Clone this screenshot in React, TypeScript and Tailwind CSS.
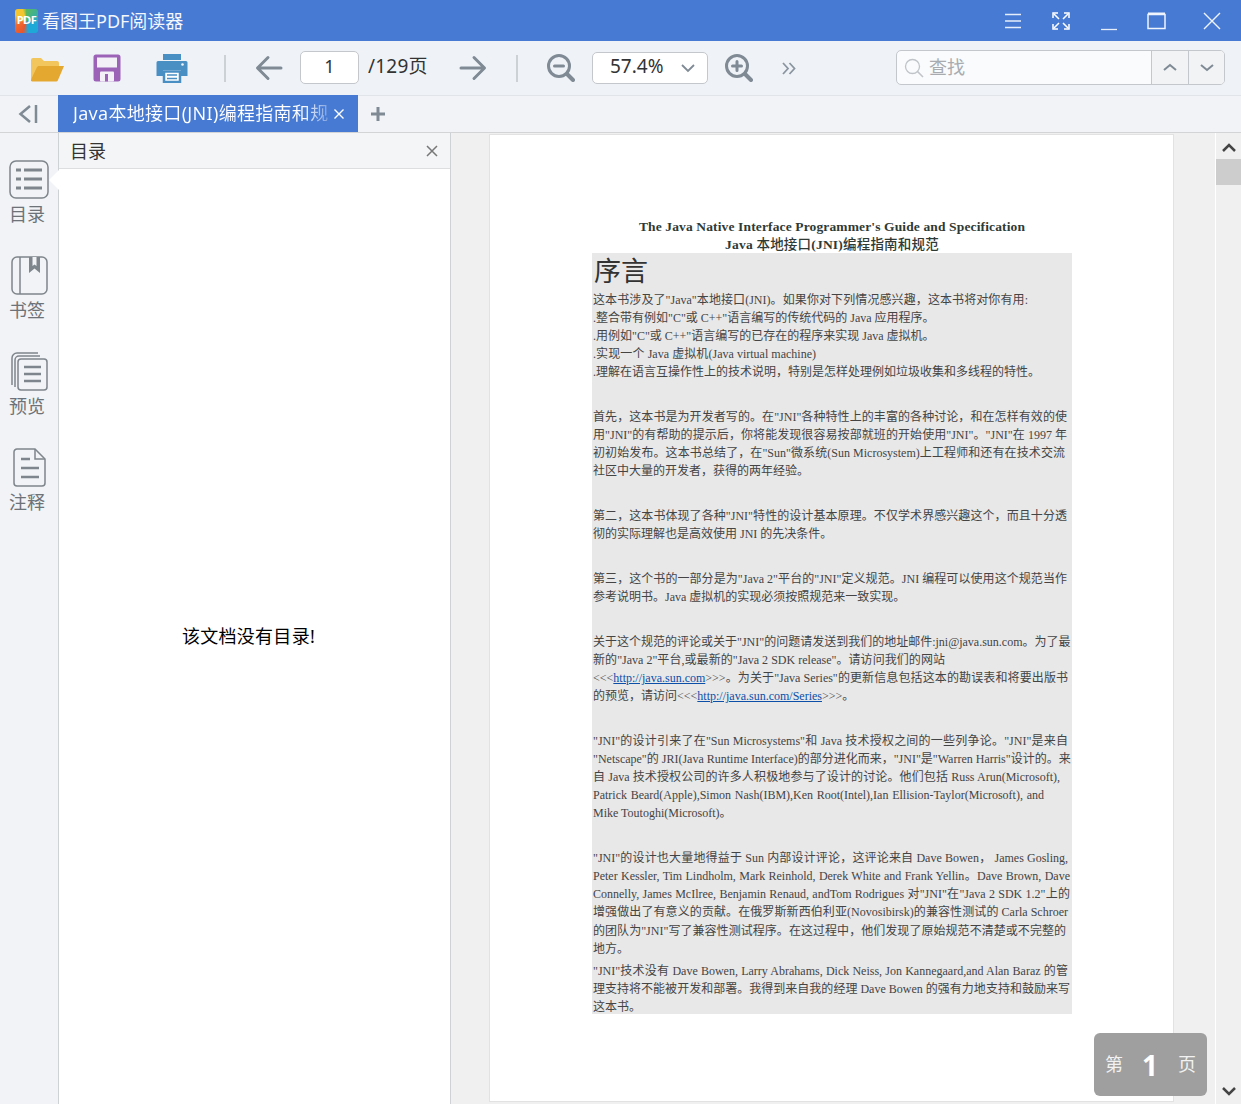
import React from "react";

const UI_FONT = "font-['Noto_Sans','Noto_Sans_CJK_SC',sans-serif]";

const FolderIcon = () => (
    <svg width="34" height="28" viewBox="0 0 34 28">
        <path d="M1 5a2 2 0 0 1 2-2h8l3 3h13a2 2 0 0 1 2 2v3H8L3 24H1z" fill="#f2c65c" />
        <path d="M8 11h26l-6 14a2 2 0 0 1-2 1.500H2.500a1.500 1.500 0 0 1-1.400-2L7 12z" fill="#e4a730" />
    </svg>
);

const SaveIcon = () => (
    <svg width="28" height="28" viewBox="0 0 28 28">
        <path d="M3 0.500h22a2.500 2.500 0 0 1 2.500 2.500v22a2.500 2.500 0 0 1-2.500 2.500H3A2.500 2.500 0 0 1 0.500 25V3A2.500 2.500 0 0 1 3 0.500z" fill="#9b62b8" />
        <rect x="4" y="3.500" width="20" height="10" fill="#f4f0f7" />
        <rect x="7" y="17.500" width="14" height="10" rx="1" fill="#f4f0f7" />
        <rect x="12" y="20" width="3" height="7.500" fill="#9b62b8" />
    </svg>
);

const PrintIcon = () => (
    <svg width="32" height="30" viewBox="0 0 32 30">
        <path d="M7 1h18v6H7z" fill="#4a8fc4" />
        <path d="M2 8h28a1.500 1.500 0 0 1 1.500 1.500V23H25v-6H7v6H0.500V9.500A1.500 1.500 0 0 1 2 8z" fill="#4a8fc4" />
        <circle cx="26.500" cy="11.500" r="1.300" fill="#f0f4f8" />
        <path d="M8 18.500h16V29H8z" fill="#fff" stroke="#4a8fc4" strokeWidth="2.500" />
        <path d="M11 22h10M11 25.500h10" stroke="#4a8fc4" strokeWidth="1.600" />
    </svg>
);

const ArrowIcon = ({ flip }: { flip?: boolean }) => (
    <svg width="28" height="26" viewBox="0 0 28 26" className={flip ? "-scale-x-100" : ""}>
        <path d="M26 13H3M13 2.500 2.500 13 13 23.500" fill="none" stroke="#7f8a95" strokeWidth="3" strokeLinecap="round" strokeLinejoin="round" />
    </svg>
);

const ZoomIcon = ({ plus }: { plus?: boolean }) => (
    <svg width="28" height="28" viewBox="0 0 28 28">
        <circle cx="12" cy="12" r="10.500" fill="none" stroke="#7f8a95" strokeWidth="3" />
        <path d="M20 20l6 6" stroke="#7f8a95" strokeWidth="4" strokeLinecap="round" />
        <path d={plus ? "M7.500 12h9M12 7.500v9" : "M7.500 12h9"} stroke="#7f8a95" strokeWidth="3" strokeLinecap="round" />
    </svg>
);

const Divider = () => <div className="w-[2px] h-[27px] bg-[#ccd1d6]" />;

const TocIcon = () => (
    <svg width="40" height="39" viewBox="0 0 40 39">
        <rect x="1" y="1" width="38" height="37" rx="6" fill="none" stroke="#7f858c" strokeWidth="1.500" />
        <path d="M7 10h5M15 10h18M7 19h5M15 19h18M7 28h5M15 28h18" stroke="#7f858c" strokeWidth="3" />
    </svg>
);

const BookmarkIcon = () => (
    <svg width="37" height="39" viewBox="0 0 37 39">
        <rect x="1" y="1" width="35" height="37" rx="5" fill="none" stroke="#7f858c" strokeWidth="1.500" />
        <path d="M9 1v37" stroke="#7f858c" strokeWidth="1.500" />
        <path d="M18 1h11v16l-5.500-4.500L18 17z" fill="#7f858c" />
        <path d="M21.500 1h4v9l-2-1.500-2 1.500z" fill="#f1f3f6" />
    </svg>
);

const PreviewIcon = () => (
    <svg width="37" height="39" viewBox="0 0 37 39">
        <path d="M1 33V6a5 5 0 0 1 5-5h21" fill="none" stroke="#7f858c" strokeWidth="1.500" />
        <path d="M4 35V8a4 4 0 0 1 4-4h21" fill="none" stroke="#7f858c" strokeWidth="1.500" />
        <rect x="7" y="7" width="29" height="31" rx="3" fill="#f1f3f6" stroke="#7f858c" strokeWidth="1.500" />
        <path d="M13 15h17M13 22h17M13 29h17" stroke="#7f858c" strokeWidth="2.500" />
    </svg>
);

const NoteIcon = () => (
    <svg width="33" height="39" viewBox="0 0 33 39">
        <path d="M4 1h18l10 10v24a3 3 0 0 1-3 3H4a3 3 0 0 1-3-3V4a3 3 0 0 1 3-3z" fill="none" stroke="#7f858c" strokeWidth="1.500" />
        <path d="M22 1v10h10" fill="none" stroke="#7f858c" strokeWidth="1.500" />
        <path d="M8 11h9M8 20h18M8 29h18" stroke="#7f858c" strokeWidth="2.500" />
    </svg>
);

const railItems = [
    { label: "目录", icon: <TocIcon />, active: true },
    { label: "书签", icon: <BookmarkIcon /> },
    { label: "预览", icon: <PreviewIcon /> },
    { label: "注释", icon: <NoteIcon /> },
];

const Line = ({ className, children }: { className: string; children: React.ReactNode }) => (
    <div className={`h-[18px] leading-[18px] whitespace-nowrap [text-align-last:justify] ${className}`}>{children}</div>
);

const Link = ({ children }: { children: React.ReactNode }) => (
    <span className="text-[#0b4fa8] underline">{children}</span>
);

const PdfPage = () => (
    <div className="w-[685px] h-[968px] ml-[38px] mt-[1px] bg-white border border-[#e2e2e2] pt-[83px] pl-[102px] shrink-0 text-[#444] text-[12px] font-['Liberation_Serif','Noto_Sans_CJK_SC',serif]">
        <div className="w-[480px] text-center font-bold text-[#2f3a36] text-[13.500px]">
            <div className="h-[17px] leading-[18px] tracking-[0.13px]">The Java Native Interface Programmer's Guide and Specification</div>
            <div className="h-[18px] leading-[20px] tracking-[0.2px]">Java <span className="font-medium">本地接口</span>(JNI)<span className="font-medium">编程指南和规范</span></div>
        </div>
        <div className="w-[480px] h-[761px] bg-[#e8e8e8] pl-[1px]">
            <div className="h-[38px] leading-[38px] pl-[1px] text-[27px] text-[#333]">序言</div>
            <Line className="w-[435px]">这本书涉及了"Java"本地接口(JNI)。如果你对下列情况感兴趣&#xFF0C;这本书将对你有用:</Line>
            <Line className="w-[339px]">.整合带有例如"C"或 C++"语言编写的传统代码的 Java 应用程序。</Line>
            <Line className="w-[339px]">.用例如"C"或 C++"语言编写的已存在的程序来实现 Java 虚拟机。</Line>
            <Line className="w-[223px]">.实现一个 Java 虚拟机(Java virtual machine)</Line>
            <Line className="w-[445px]">.理解在语言互操作性上的技术说明&#xFF0C;特别是怎样处理例如垃圾收集和多线程的特性。</Line>

            <div className="mt-[27px]">
                <Line className="w-[474px]">首先&#xFF0C;这本书是为开发者写的。在"JNI"各种特性上的丰富的各种讨论&#xFF0C;和在怎样有效的使</Line>
                <Line className="w-[474px]">用"JNI"的有帮助的提示后&#xFF0C;你将能发现很容易按部就班的开始使用"JNI"。"JNI"在 1997 年</Line>
                <Line className="w-[472px]">初初始发布。这本书总结了&#xFF0C;在"Sun"微系统(Sun Microsystem)上工程师和还有在技术交流</Line>
                <Line className="w-[213px]">社区中大量的开发者&#xFF0C;获得的两年经验。</Line>
            </div>

            <div className="mt-[27px]">
                <Line className="w-[474px]">第二&#xFF0C;这本书体现了各种"JNI"特性的设计基本原理。不仅学术界感兴趣这个&#xFF0C;而且十分透</Line>
                <Line className="w-[234px]">彻的实际理解也是高效使用 JNI 的先决条件。</Line>
            </div>

            <div className="mt-[27px]">
                <Line className="w-[474px]">第三&#xFF0C;这个书的一部分是为"Java 2"平台的"JNI"定义规范。JNI 编程可以使用这个规范当作</Line>
                <Line className="w-[310px]">参考说明书。Java 虚拟机的实现必须按照规范来一致实现。</Line>
            </div>

            <div className="mt-[27px]">
                <Line className="w-[477px]">关于这个规范的评论或关于"JNI"的问题请发送到我们的地址邮件:jni@java.sun.com。为了最</Line>
                <Line className="w-[352px]">新的"Java 2"平台,或最新的"Java 2 SDK release"。请访问我们的网站</Line>
                <Line className="w-[475px]">{"<<<"}<Link>http://java.sun.com</Link>{">>>"}。为关于"Java Series"的更新信息包括这本的勘误表和将要出版书</Line>
                <Line className="w-[258px]">的预览&#xFF0C;请访问{"<<<"}<Link>http://java.sun.com/Series</Link>{">>>"}。</Line>
            </div>

            <div className="mt-[27px]">
                <Line className="w-[475px]">"JNI"的设计引来了在"Sun Microsystems"和 Java 技术授权之间的一些列争论。"JNI"是来自</Line>
                <Line className="w-[477px]">"Netscape"的 JRI(Java Runtime Interface)的部分进化而来&#xFF0C;"JNI"是"Warren Harris"设计的。来</Line>
                <Line className="w-[467px]">自 Java 技术授权公司的许多人积极地参与了设计的讨论。他们包括 Russ Arun(Microsoft),</Line>
                <Line className="w-[451px]">Patrick Beard(Apple),Simon Nash(IBM),Ken Root(Intel),Ian Ellision-Taylor(Microsoft), and</Line>
                <Line className="w-[134px]">Mike Toutoghi(Microsoft)。</Line>
            </div>

            <div className="mt-[27px]">
                <Line className="w-[475px]">"JNI"的设计也大量地得益于 Sun 内部设计评论&#xFF0C;这评论来自 Dave Bowen&#xFF0C; James Gosling,</Line>
                <Line className="w-[477px]">Peter Kessler, Tim Lindholm, Mark Reinhold, Derek White and Frank Yellin。Dave Brown, Dave</Line>
                <Line className="w-[477px]">Connelly, James McIlree, Benjamin Renaud, andTom Rodrigues 对"JNI"在"Java 2 SDK 1.2"上的</Line>
                <Line className="w-[475px]">增强做出了有意义的贡献。在俄罗斯新西伯利亚(Novosibirsk)的兼容性测试的 Carla Schroer</Line>
                <Line className="w-[473px] mt-[1px]">的团队为"JNI"写了兼容性测试程序。在这过程中&#xFF0C;他们发现了原始规范不清楚或不完整的</Line>
                <Line className="w-[31px]">地方。</Line>
            </div>

            <div className="mt-[4px]">
                <Line className="w-[475px]">"JNI"技术没有 Dave Bowen, Larry Abrahams, Dick Neiss, Jon Kannegaard,and Alan Baraz 的管</Line>
                <Line className="w-[477px]">理支持将不能被开发和部署。我得到来自我的经理 Dave Bowen 的强有力地支持和鼓励来写</Line>
                <Line className="w-[44px]">这本书。</Line>
            </div>
        </div>
    </div>
);

const App: React.FC = () => {
    return (
        <div className={`relative w-[1241px] h-[1104px] overflow-hidden flex flex-col bg-white ${UI_FONT}`}>
            {/* title bar */}
            <div className="h-[41px] shrink-0 bg-[#477ad3] flex items-center text-white">
                <div className="ml-[15px] w-[23px] h-[24px] rounded-[3px] flex items-center justify-center text-[11px] font-bold tracking-[-0.5px] bg-[conic-gradient(#5ab95c_0deg,#1ea8d8_110deg,#1ea8d8_170deg,#e8562e_200deg,#f26a2c_250deg,#f5c52f_300deg,#f5c52f_340deg,#5ab95c_360deg)]">PDF</div>
                <span className="ml-[4px] text-[18px] leading-none text-[#f4f7fc]">看图王PDF阅读器</span>
                <div className="flex-1" />
                <svg width="18" height="16" viewBox="0 0 18 16" className="mr-[30px]">
                    <path d="M1 1.500h16M1 8h16M1 14.500h16" stroke="#e6eefb" strokeWidth="1.500" />
                </svg>
                <svg width="18" height="18" viewBox="0 0 18 18" className="mr-[30px]">
                    <path d="M2 2l5 5M16 2l-5 5M2 16l5-5M16 16l-5-5" stroke="#fff" strokeWidth="1.500" />
                    <path d="M1 6V1h5M12 1h5v5M1 12v5h5M17 12v5h-5" fill="none" stroke="#fff" strokeWidth="1.500" />
                </svg>
                <svg width="18" height="18" viewBox="0 0 18 18" className="mr-[29px] mt-[6px]">
                    <path d="M1 14.500h16" stroke="#e6eefb" strokeWidth="1.300" />
                </svg>
                <svg width="19" height="18" viewBox="0 0 19 18" className="mr-[37px]">
                    <path d="M1 2.500h17V16.500H1z" fill="none" stroke="#f0f5fd" strokeWidth="1.500" />
                    <path d="M1 1.500h17" stroke="#f0f5fd" strokeWidth="2" />
                </svg>
                <svg width="18" height="18" viewBox="0 0 18 18" className="mr-[20px]">
                    <path d="M1 1l16 16M17 1L1 17" stroke="#f0f5fd" strokeWidth="1.400" />
                </svg>
            </div>

            {/* toolbar */}
            <div className="h-[55px] shrink-0 bg-[#eff3f8] border-b border-[#e1e4e8] flex items-center">
                <div className="ml-[30px] mt-[2px]"><FolderIcon /></div>
                <div className="ml-[29px]"><SaveIcon /></div>
                <div className="ml-[35px]"><PrintIcon /></div>
                <div className="ml-[36px]"><Divider /></div>
                <div className="ml-[29px]"><ArrowIcon /></div>
                <div className="ml-[17px] w-[59px] h-[33px] -mt-[1px] pb-[2px] bg-white border border-[#c4c8cc] rounded-[5px] flex items-center justify-center text-[18px] text-[#333]">1</div>
                <span className="ml-[9px] w-[60px] pb-[3px] text-[19px] tracking-[0.2px] text-[#333] whitespace-nowrap">/129页</span>
                <div className="ml-[31px]"><ArrowIcon flip /></div>
                <div className="ml-[29px]"><Divider /></div>
                <div className="ml-[29px]"><ZoomIcon /></div>
                <div className="ml-[17px] w-[116px] h-[32px] bg-white border border-[#c4c8cc] rounded-[5px] flex items-center text-[19px] text-[#333]">
                    <span className="ml-[17px] w-[54px] pb-[3px]">57.4%</span>
                    <svg width="14" height="9" viewBox="0 0 14 9" className="ml-[17px]">
                        <path d="M1 1l6 6 6-6" fill="none" stroke="#7f8a95" strokeWidth="1.800" />
                    </svg>
                </div>
                <div className="ml-[17px]"><ZoomIcon plus /></div>
                <svg width="14" height="13" viewBox="0 0 14 13" className="ml-[29px]">
                    <path d="M1 1l5 5.500-5 5.500M7.500 1l5 5.500-5 5.500" fill="none" stroke="#8b95a0" strokeWidth="1.800" />
                </svg>
                <div className="ml-[100px] w-[329px] h-[35px] -mt-[1px] bg-[#f9fbfc] border border-[#c4c8cc] rounded-[5px] flex items-center overflow-hidden">
                    <svg width="20" height="20" viewBox="0 0 20 20" className="ml-[7px]">
                        <circle cx="8.500" cy="8.500" r="7" fill="none" stroke="#c0c4c8" strokeWidth="1.300" />
                        <path d="M13.500 13.500l5.500 5.500" stroke="#c0c4c8" strokeWidth="1.600" />
                    </svg>
                    <span className="ml-[5px] flex-1 text-[18px] text-[#a8acb0]">查找</span>
                    <div className="w-[37px] h-full bg-[#f1f3f5] border-l border-[#c4c8cc] flex items-center justify-center">
                        <svg width="14" height="9" viewBox="0 0 14 9"><path d="M1 7l6-5 6 5" fill="none" stroke="#7f8a95" strokeWidth="2" /></svg>
                    </div>
                    <div className="w-[36px] h-full bg-[#f1f3f5] border-l border-[#c4c8cc] flex items-center justify-center">
                        <svg width="14" height="9" viewBox="0 0 14 9"><path d="M1 2l6 5 6-5" fill="none" stroke="#7f8a95" strokeWidth="2" /></svg>
                    </div>
                </div>
            </div>

            {/* tab row */}
            <div className="h-[37px] shrink-0 bg-[#f1f3f6] border-b border-[#d2d4d6] flex">
                <div className="w-[58px] h-full flex items-center justify-center pr-[3px]">
                    <svg width="20" height="20" viewBox="0 0 20 20">
                        <path d="M12 2L2.500 10 12 18" fill="none" stroke="#7f8a95" strokeWidth="2.500" />
                        <path d="M18 1v18" stroke="#7f8a95" strokeWidth="2.500" />
                    </svg>
                </div>
                <div className="w-[300px] h-[37px] -mt-[1px] bg-[#477ad3] flex items-center text-white">
                    <span className="ml-[15px] w-[255px] text-[18px] tracking-[0.3px] whitespace-nowrap bg-[linear-gradient(to_right,#fff_90%,#7fa2e0_100%)] bg-clip-text text-transparent">Java本地接口(JNI)编程指南和规</span>
                    <svg width="12" height="12" viewBox="0 0 12 12" className="ml-[5px]">
                        <path d="M1.500 1.500l9 9M10.500 1.500l-9 9" stroke="#fff" strokeWidth="1.400" />
                    </svg>
                </div>
                <svg width="16" height="16" viewBox="0 0 16 16" className="ml-[12px] mt-[10px]">
                    <path d="M8 1v14M1 8h14" stroke="#7f8a95" strokeWidth="3" />
                </svg>
            </div>

            {/* body */}
            <div className="flex-1 flex min-h-0">
                <div className="relative w-[59px] shrink-0 bg-[#f1f3f6] border-r border-[#cfd2d5] pt-[27px]">
                    {railItems.map((item) => (
                        <div key={item.label} className="h-[96px] flex flex-col items-center">
                            <div className="h-[39px] flex items-center justify-center">{item.icon}</div>
                            <span className="mt-[2px] -ml-[4px] text-[18px] leading-[26px] text-[#6d7278]">{item.label}</span>
                        </div>
                    ))}
                    <div className="absolute right-[-1px] top-[37px] w-[10px] h-[20px] bg-white [clip-path:polygon(100%_0,0_50%,100%_100%)]" />
                </div>

                <div className="w-[392px] shrink-0 border-r border-[#cfd2d5] flex flex-col">
                    <div className="h-[36px] shrink-0 bg-[#f3f5f7] border-b border-[#dcdee0] flex items-center justify-between">
                        <span className="ml-[11px] pt-[2px] text-[18px] text-[#333]">目录</span>
                        <svg width="12" height="12" viewBox="0 0 12 12" className="mr-[12px]">
                            <path d="M1 1l10 10M11 1L1 11" stroke="#777" strokeWidth="1.500" />
                        </svg>
                    </div>
                    <div className="flex-1 bg-white flex items-center justify-center pr-[12px] text-[18px] tracking-[0.3px] text-black">该文档没有目录!</div>
                </div>

                <div className="flex-1 bg-[#f0f0f0] flex min-w-0">
                    <div className="flex-1"><PdfPage /></div>
                    <div className="w-[26px] shrink-0 border-l border-white flex flex-col items-center">
                        <svg width="14" height="10" viewBox="0 0 14 10" className="mt-[10px]">
                            <path d="M1 8l6-6 6 6" fill="none" stroke="#444" strokeWidth="2.500" />
                        </svg>
                        <div className="w-full h-[26px] mt-[6px] bg-[#cdcdcd]" />
                        <div className="flex-1" />
                        <svg width="14" height="10" viewBox="0 0 14 10" className="mb-[8px]">
                            <path d="M1 2l6 6 6-6" fill="none" stroke="#444" strokeWidth="2.500" />
                        </svg>
                    </div>
                </div>
            </div>

            {/* page badge */}
            <div className="absolute left-[1094px] top-[1033px] w-[113px] h-[63px] rounded-[6px] bg-[#9f9f9f] flex items-center text-[#f2f2f2] text-[18px]">
                <span className="ml-[11px]">第</span>
                <span className="ml-[19px] text-[28px] font-bold text-white">1</span>
                <span className="ml-[20px]">页</span>
            </div>
        </div>
    );
};

export default App;
